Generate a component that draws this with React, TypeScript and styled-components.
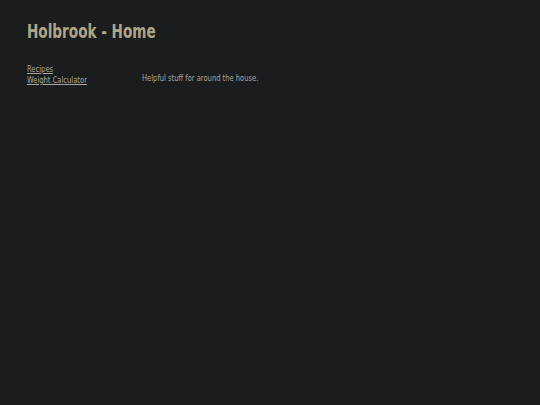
import React from "react";
import styled, { createGlobalStyle } from "styled-components";

const Global = createGlobalStyle`
  html, body { margin: 0; padding: 0; background: #1b1c1e; }
  body {
    font-family: "DejaVu Sans Condensed", "DejaVu Sans", "Liberation Sans", sans-serif;
    font-stretch: condensed;
  }
`;

const Page = styled.div`
  min-height: 405px;
  padding: 18px 27px;
  box-sizing: border-box;
`;

const Title = styled.h1`
  margin: 0 0 19px;
  font-size: 19px;
  font-weight: bold;
  color: #b0a587;
  line-height: 26px;
  white-space: nowrap;
  transform: scaleX(0.795);
  transform-origin: left center;
`;

const Main = styled.div`
  display: flex;
  align-items: flex-start;
`;

const Nav = styled.nav`
  display: flex;
  flex-direction: column;
  align-items: flex-start;
  width: 115px;
`;

const NavLink = styled.a`
  display: block;
  color: #a9a79f;
  font-size: 9.5px;
  line-height: 11px;
  white-space: nowrap;
  text-decoration: underline;
  transform: scaleX(0.79);
  transform-origin: left center;
`;

const Content = styled.p`
  margin: 9px 0 0;
  color: #a9a79f;
  font-size: 9.5px;
  line-height: 11px;
  white-space: nowrap;
  transform: scaleX(0.79);
  transform-origin: left center;
`;

export default function App() {
  return (
    <>
      <Global />
      <Page>
        <Title>Holbrook - Home</Title>
        <Main>
          <Nav>
            <NavLink href="#">Recipes</NavLink>
            <NavLink href="#">Weight Calculator</NavLink>
          </Nav>
          <Content>Helpful stuff for around the house.</Content>
        </Main>
      </Page>
    </>
  );
}
